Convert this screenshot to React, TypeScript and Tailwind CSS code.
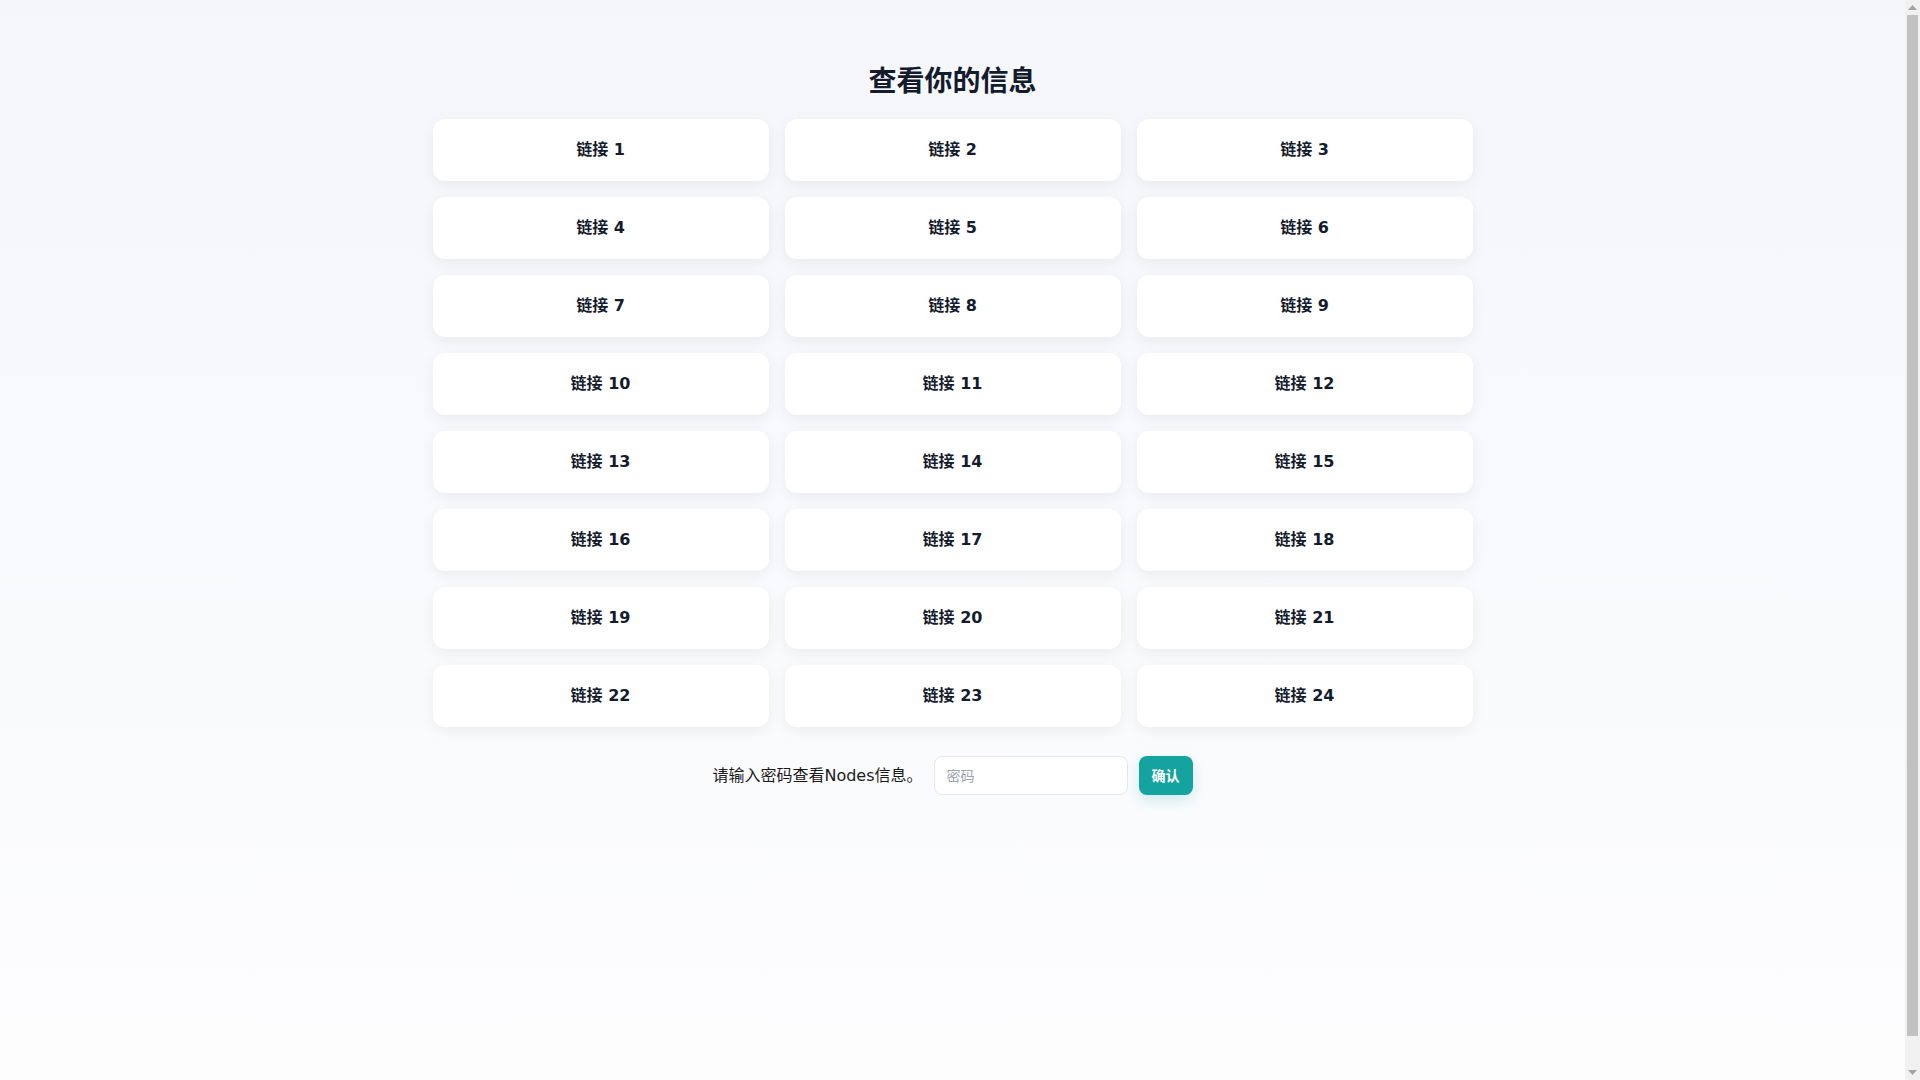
import React, { useState } from "react";

const links = Array.from({ length: 24 }, (_, i) => ({
  id: i + 1,
  label: `链接 ${i + 1}`,
}));

const Arrow = ({ down }: { down?: boolean }) => (
  <div className="flex h-[15px] items-center justify-center">
    <svg width="9" height="5" viewBox="0 0 9 5">
      <polygon points={down ? "0,0 9,0 4.5,5" : "4.5,0 9,5 0,5"} fill="#a3a3a3" />
    </svg>
  </div>
);

const App = () => {
  const [password, setPassword] = useState("");

  return (
    <div className="flex h-screen">
      <div className="flex-1 overflow-y-auto [scrollbar-width:none]">
        <div className="box-content min-h-full py-4 bg-gradient-to-b from-[#f4f6fa] to-[#fdfdfe] font-['DejaVu_Sans','Noto_Sans_CJK_SC',sans-serif] text-[#111827]">
          <div className="mx-auto max-w-[1040px] pt-[48px]">
            <h1 className="text-center text-[28px] leading-9 font-bold text-[#141b2d] mb-[19px]">
              查看你的信息
            </h1>

            <div className="grid grid-cols-3 gap-4">
              {links.map((link) => (
                <a
                  key={link.id}
                  href="#"
                  className="flex h-[62px] items-center justify-center rounded-xl bg-white text-base font-bold text-[#141b2d] shadow-[0_4px_14px_rgba(15,23,42,0.06)]"
                >
                  {link.label}
                </a>
              ))}
            </div>

            <div className="mt-[29px] flex items-center justify-center gap-[11px]">
              <span className="text-base text-[#1a1a1a]">请输入密码查看Nodes信息。</span>
              <input
                type="password"
                placeholder="密码"
                value={password}
                onChange={(e) => setPassword(e.target.value)}
                className="h-[39px] w-[194px] rounded-lg border border-[#e5e7eb] bg-white px-3 text-sm placeholder:text-[#9ca3af] outline-none"
              />
              <button className="h-[39px] rounded-lg bg-[#14a39f] px-[13px] text-sm font-bold text-white shadow-[0_6px_14px_rgba(20,163,159,0.18)]">
                确认
              </button>
            </div>
          </div>
        </div>
      </div>

      {/* scrollbar strip as in the capture */}
      <div className="flex w-[15px] flex-col bg-[#f1f1f1]">
        <Arrow />
        <div className="mx-[2px] h-[1021px] bg-[#c1c1c1]" />
        <div className="flex-1" />
        <Arrow down />
      </div>
    </div>
  );
};

export default App;
